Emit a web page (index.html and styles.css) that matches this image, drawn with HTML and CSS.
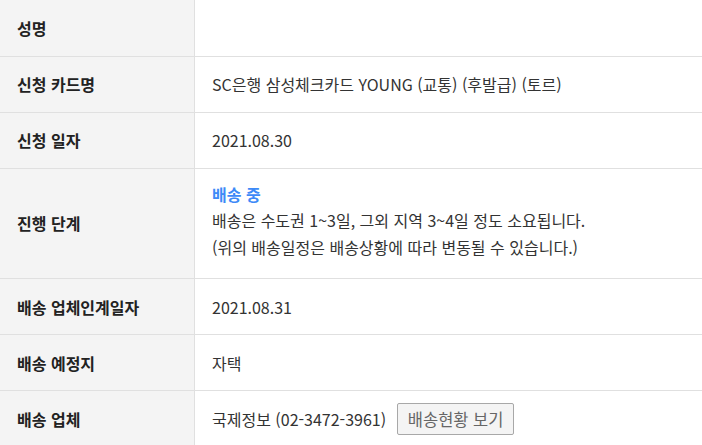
FILE: index.html
```html
<!doctype html>
<html lang="ko">
    <head>
        <meta charset="UTF-8" />
        <meta name="viewport" content="width=device-width, initial-scale=1.0" />
        <title>카드 신청 조회</title>
        <link rel="stylesheet" href="styles.css">
    </head>
    <body>
        <table class="info-table">
            <tbody>
                <tr>
                    <th>성명</th>
                    <td></td>
                </tr>
                <tr>
                    <th>신청 카드명</th>
                    <td>SC은행 삼성체크카드 YOUNG (교통) (후발급) (토르)</td>
                </tr>
                <tr>
                    <th>신청 일자</th>
                    <td>2021.08.30</td>
                </tr>
                <tr class="status-row">
                    <th>진행 단계</th>
                    <td>
                        <p class="status">배송 중</p>
                        <p>배송은 수도권 1~3일, 그외 지역 3~4일 정도 소요됩니다.</p>
                        <p>(위의 배송일정은 배송상황에 따라 변동될 수 있습니다.)</p>
                    </td>
                </tr>
                <tr>
                    <th>배송 업체인계일자</th>
                    <td>2021.08.31</td>
                </tr>
                <tr>
                    <th>배송 예정지</th>
                    <td>자택</td>
                </tr>
                <tr>
                    <th>배송 업체</th>
                    <td>
                        <div class="carrier">
                            <span>국제정보 (02-3472-3961)</span>
                            <button class="track-btn" type="button">배송현황 보기</button>
                        </div>
                    </td>
                </tr>
            </tbody>
        </table>
    </body>
</html>
```

FILE: styles.css
```css
body {
    margin: 0;
    font-family: 'Noto Sans CJK KR', 'Noto Sans', sans-serif;
    font-size: 16px;
    color: #333;
    background: #fff;
}

.info-table {
    width: 100%;
    border-collapse: collapse;
}

.info-table tr {
    border-bottom: 1px solid #e0e0e0;
    height: 56px;
}

.info-table th {
    width: 177px;
    padding: 0 0 0 17px;
    background: #f4f4f4;
    border-right: 1px solid #e0e0e0;
    text-align: left;
    font-weight: 700;
    color: #222;
    line-height: 22px;
}

.info-table td {
    padding: 0 17px;
    line-height: 22px;
}

.status-row td {
    padding-top: 12px;
    padding-bottom: 18px;
}

.status-row p {
    margin: 0;
    line-height: 26.5px;
}

.status-row .status {
    color: #3d8af7;
    font-weight: 700;
}

.carrier {
    display: flex;
    align-items: center;
    gap: 11px;
}

.track-btn {
    width: 117px;
    height: 32px;
    padding: 0;
    background: #f4f4f4;
    border: 1px solid #a8a8a8;
    border-radius: 2px;
    font-family: inherit;
    font-size: 16.5px;
    color: #666;
}
```
